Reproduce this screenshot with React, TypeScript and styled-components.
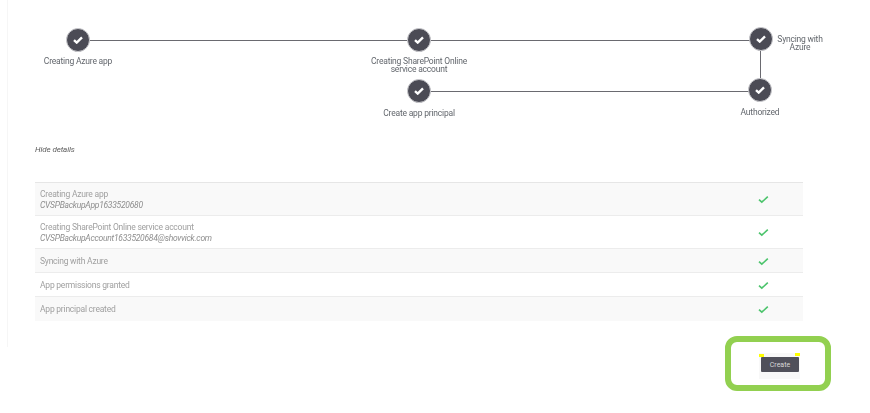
import styled, { createGlobalStyle } from "styled-components";

const GlobalStyle = createGlobalStyle`
  html, body {
    margin: 0;
    padding: 0;
    background: #fff;
  }
  body {
    font-family: Roboto, "Liberation Sans", sans-serif;
  }
`;

const rows = [
  { title: "Creating Azure app", sub: "CVSPBackupApp1633520680" },
  { title: "Creating SharePoint Online service account", sub: "CVSPBackupAccount1633520684@shovvick.com" },
  { title: "Syncing with Azure" },
  { title: "App permissions granted" },
  { title: "App principal created" },
];

const Check = () => (
  <svg width="10" height="8" viewBox="0 0 10 8">
    <path d="M1 4.2 L3.7 6.6 L9 1.4" fill="none" stroke="#fff" strokeWidth="2.4" />
  </svg>
);

const TickGreen = () => (
  <svg width="11" height="9" viewBox="0 0 11 9">
    <path d="M1 4.6 L3.8 7.2 L9.8 1.6" fill="none" stroke="#4cc46c" strokeWidth="1.6" />
  </svg>
);

export default function App() {
  return (
    <Page>
      <GlobalStyle />
      <Stepper>
        <TopLink />
        <LoopLink />
        <Step>
          <Node><Check /></Node>
          <StepLabel>Creating Azure app</StepLabel>
        </Step>
        <Step>
          <Node><Check /></Node>
          <StepLabel>Creating SharePoint Online service account</StepLabel>
        </Step>
        <SideStep>
          <Node><Check /></Node>
          <SideLabel>Syncing with Azure</SideLabel>
        </SideStep>
        <Step $column={2} $nudge={1}>
          <Node><Check /></Node>
          <StepLabel>Create app principal</StepLabel>
        </Step>
        <Step $column={3}>
          <Node><Check /></Node>
          <StepLabel>Authorized</StepLabel>
        </Step>
      </Stepper>
      <Details>Hide details</Details>
      <Table>
        {rows.map((r, i) => (
          <Row key={r.title} $shaded={i % 2 === 0} $tall={!!r.sub}>
            <RowText>
              <div>{r.title}</div>
              {r.sub && <SubText>{r.sub}</SubText>}
            </RowText>
            <TickCell>
              <TickGreen />
            </TickCell>
          </Row>
        ))}
      </Table>
      <Footer>
        <Highlight>
          <ButtonBox>
            <Marker $side="left" />
            <Marker $side="right" />
            <CreateButton>Create</CreateButton>
          </ButtonBox>
        </Highlight>
      </Footer>
    </Page>
  );
}

const Page = styled.div`
  width: 870px;
  height: 413px;
  overflow: hidden;
  position: relative;
  filter: blur(0.4px);

  &::before {
    content: "";
    position: absolute;
    left: 7px;
    top: 0;
    width: 1px;
    height: 347px;
    background: #f6f6f6;
  }
`;

const Stepper = styled.div`
  position: relative;
  box-sizing: border-box;
  height: 144px;
  padding: 28px 0 0 23px;
  display: grid;
  grid-template-columns: 341px 341px 110px;
  grid-template-rows: 45px auto;
  row-gap: 5px;
  align-items: start;
`;

const TopLink = styled.div`
  position: absolute;
  left: 78px;
  top: 40px;
  width: 683px;
  height: 1px;
  background: #6a6a70;
`;

const LoopLink = styled.div`
  position: absolute;
  left: 419px;
  top: 40px;
  width: 341px;
  height: 50px;
  border: 1px solid #6a6a70;
  border-left: none;
`;

const Step = styled.div<{ $column?: number; $nudge?: number }>`
  position: relative;
  width: 110px;
  ${(p) => p.$column && `grid-column: ${p.$column};`}
  margin-top: ${(p) => p.$nudge ?? 0}px;
  display: flex;
  flex-direction: column;
  align-items: center;
  gap: ${(p) => (p.$column ? 6 : 5)}px;
`;

const SideStep = styled.div`
  position: relative;
  margin-top: -1px;
  padding-left: 44px;
  display: flex;
  align-items: flex-start;
`;

const Node = styled.div`
  flex: none;
  width: 24px;
  height: 24px;
  box-sizing: border-box;
  border-radius: 50%;
  background: #4b4b55;
  border: 1px solid #c9c9cd;
  display: flex;
  align-items: center;
  justify-content: center;
`;

const StepLabel = styled.div`
  font-size: 8.5px;
  letter-spacing: -0.2px;
  line-height: 8px;
  text-align: center;
  color: #63676d;
`;

const SideLabel = styled(StepLabel)`
  width: 54px;
  flex: none;
  margin-top: 8px;
`;

const Details = styled.div`
  margin-left: 35px;
  font-size: 8px;
  letter-spacing: -0.1px;
  line-height: 12px;
  font-style: italic;
  color: #5c5c5c;
`;

const Table = styled.div`
  margin: 26px 0 0 35px;
  width: 768px;
  border-top: 1px solid #e6e6e6;
`;

const Row = styled.div<{ $shaded: boolean; $tall: boolean }>`
  display: flex;
  align-items: center;
  box-sizing: border-box;
  height: ${(p) => (p.$tall ? "33px" : "24px")};
  padding: 1px 0 0 5px;
  background: ${(p) => (p.$shaded ? "#f9f9f9" : "#fff")};
  border-bottom: 1.5px solid #ececec;

  &:last-child {
    padding-top: 0;
    border-bottom: none;
  }
`;

const RowText = styled.div`
  flex: 1;
  font-size: 8.5px;
  letter-spacing: -0.22px;
  line-height: 11px;
  color: #a0a0a0;
`;

const SubText = styled.div`
  font-style: italic;
  letter-spacing: -0.27px;
  color: #8e8e8e;
`;

const TickCell = styled.div`
  width: 80px;
  display: flex;
  justify-content: center;
`;

const Footer = styled.div`
  display: flex;
  justify-content: flex-end;
  padding: 15px 39px 0 0;
`;

const Highlight = styled.div`
  box-sizing: border-box;
  width: 106px;
  height: 55px;
  padding: 5px 0 0 3px;
  border: 6px solid #92d050;
  border-radius: 12px;
  display: flex;
  align-items: center;
  justify-content: center;
`;

const ButtonBox = styled.div`
  position: relative;
  box-sizing: border-box;
  width: 41px;
  height: 26px;
  padding: 4px 1px 0 2px;
  background: #f8f8f8;
  display: flex;
  align-items: flex-start;
`;

const Marker = styled.span<{ $side: "left" | "right" }>`
  position: absolute;
  top: ${(p) => (p.$side === "left" ? "1px" : "0")};
  ${(p) => p.$side}: 0;
  width: 5px;
  height: 3px;
  background: #ffff00;
`;

const CreateButton = styled.button`
  width: 38px;
  height: 15px;
  padding: 0;
  border: none;
  border-radius: 1px;
  background: #50505a;
  color: #d8d8d8;
  font-family: Roboto, sans-serif;
  font-size: 7px;
`;
